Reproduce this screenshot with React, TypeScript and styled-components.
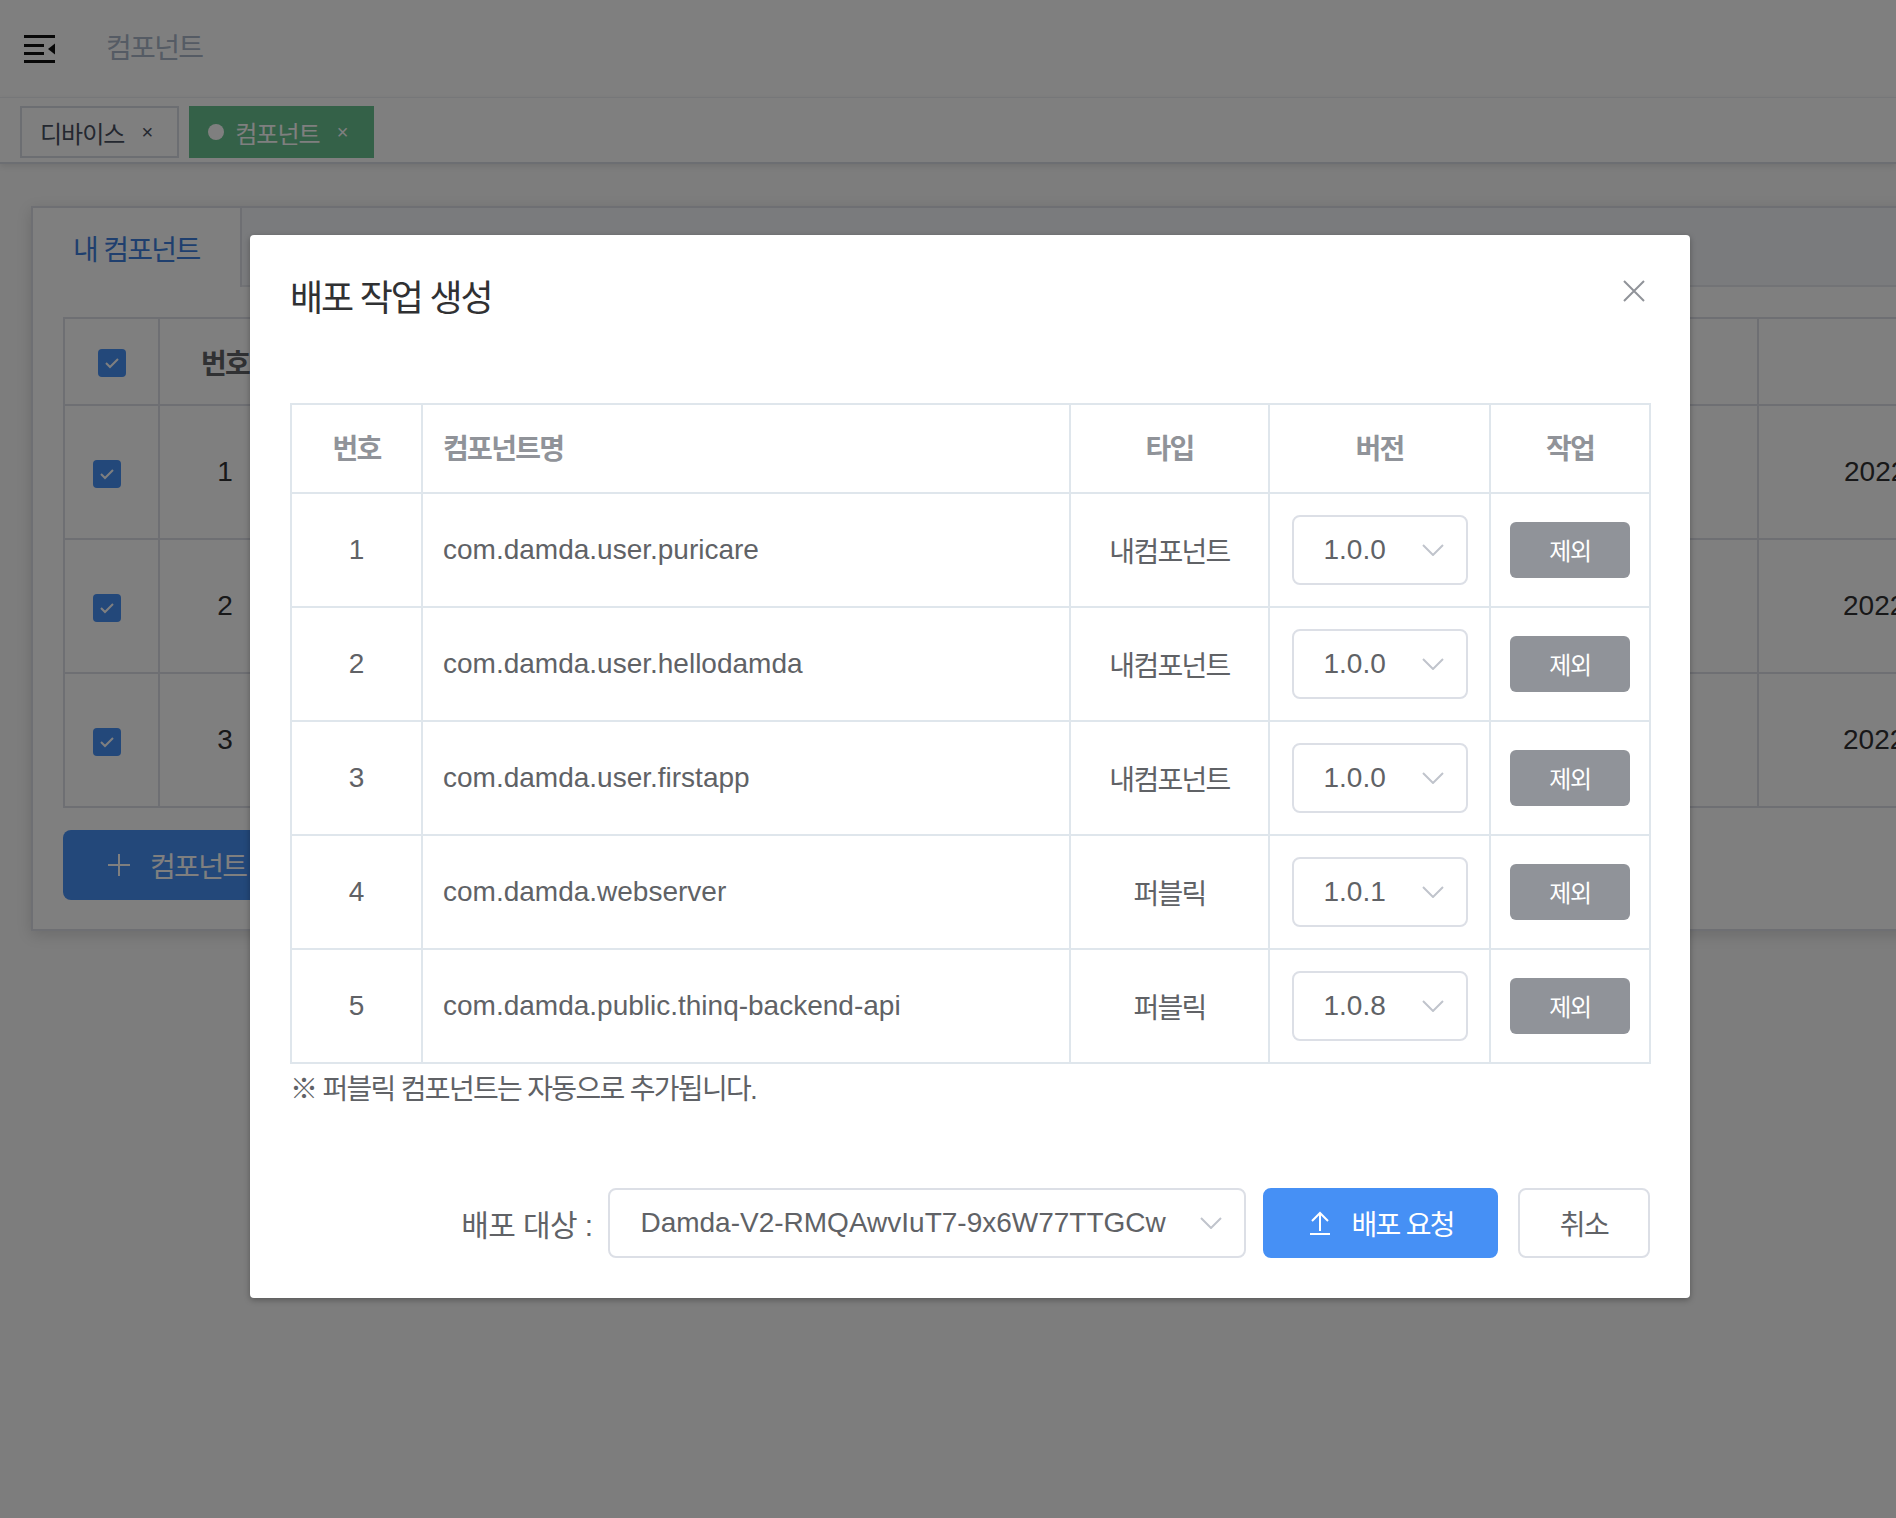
import React from "react";
import styled, { createGlobalStyle, css } from "styled-components";

const FONT = `"Liberation Sans", "Noto Sans CJK KR", sans-serif`;
const PRIMARY = "#4690F5";

/* Hangul in Noto Sans CJK is a little wider than in the reference font */
const tight = css`
  letter-spacing: -0.06em;
`;

const GlobalStyle = createGlobalStyle`
  html, body { margin: 0; padding: 0; }
  body {
    font-family: ${FONT};
    background: #fafafa;
    width: 1896px;
    height: 1518px;
    overflow: hidden;
  }
  * { box-sizing: border-box; }
`;

const Page = styled.div`
  position: relative;
  width: 1896px;
  height: 1518px;
  overflow: hidden;
  background: #fafafa;
  display: flex;
  flex-direction: column;
`;

const Navbar = styled.header`
  height: 97px;
  flex: none;
  background: #fff;
  display: flex;
  align-items: center;
  gap: 50px;
  padding-left: 24px;
`;

const Breadcrumb = styled.span`
  font-size: 28px;
  color: #aab6c8;
  line-height: 1;
  ${tight}
`;

const TagsBar = styled.nav`
  height: 67px;
  flex: none;
  background: #fff;
  border-top: 1px solid #eceef2;
  border-bottom: 2px solid #d8dce5;
  box-shadow: 0 2px 6px rgba(0, 0, 0, 0.1);
  display: flex;
  align-items: flex-start;
  gap: 10px;
  padding: 8px 0 0 20px;
`;

const Tag = styled.div<{ $active?: boolean }>`
  height: 52px;
  display: flex;
  align-items: center;
  padding: 0 24px 0 18px;
  font-size: 24px;
  letter-spacing: -0.04em;
  border: 2px solid #d8dce5;
  background: #fff;
  color: #495060;
  ${(p) =>
    p.$active &&
    css`
      background: #68c290;
      border-color: #68c290;
      color: #fff;
      padding-left: 17px;
    `}
`;

const TagDot = styled.span`
  width: 16px;
  height: 16px;
  border-radius: 50%;
  background: #fff;
  margin-right: 11px;
`;

const TagClose = styled.span`
  font-size: 20px;
  margin-left: 17px;
  line-height: 1;
  letter-spacing: 0;
`;

const Main = styled.main`
  flex: 1;
  padding: 42px 0 0 31px;
  overflow: hidden;
`;

const Card = styled.section`
  width: 2210px;
  height: 725px;
  background: #fff;
  border: 2px solid #dcdfe6;
  box-shadow: 0 4px 14px rgba(0, 0, 0, 0.14);
  display: flex;
  flex-direction: column;
`;

const TabHeader = styled.div`
  height: 79px;
  flex: none;
  background: #f5f7fa;
  border-bottom: 2px solid #e4e7ed;
  display: flex;
`;

const TabItem = styled.div<{ $active?: boolean }>`
  padding: 0 40px;
  display: flex;
  align-items: center;
  font-size: 28px;
  color: #909399;
  ${tight}
  ${(p) =>
    p.$active &&
    css`
      background: #fff;
      color: #3f7fdd;
      border-right: 2px solid #dcdfe6;
      margin-bottom: -2px;
    `}
`;

const CardBody = styled.div`
  padding: 30px 30px;
  display: flex;
  flex-direction: column;
  align-items: flex-start;
  gap: 22px;
`;

const BgTable = styled.table`
  border-collapse: collapse;
  table-layout: fixed;
  width: 2124px;
  font-size: 28px;
  color: #303133;
`;

const BgTh = styled.th`
  height: 87px;
  border: 2px solid #dcdfe6;
  font-weight: bold;
  color: #606266;
  text-align: center;
  padding: 0;
  ${tight}
`;

const BgTd = styled.td<{ $check?: boolean }>`
  height: 134px;
  border: 2px solid #dcdfe6;
  text-align: center;
  padding: 0 ${(p) => (p.$check ? "9px" : "0")} 0 0;
`;

const CheckBox = styled.span`
  display: inline-flex;
  align-items: center;
  justify-content: center;
  width: 28px;
  height: 28px;
  border-radius: 4px;
  background: #4690f5;
  vertical-align: middle;
`;

const AddButton = styled.button`
  height: 70px;
  padding: 0 40px 0 45px;
  border: none;
  border-radius: 8px;
  background: ${PRIMARY};
  color: #fff;
  font-family: ${FONT};
  font-size: 28px;
  display: flex;
  align-items: center;
  gap: 20px;
  ${tight}
`;

/* ---------- dialog ---------- */

const Overlay = styled.div`
  position: absolute;
  inset: 0;
  background: rgba(0, 0, 0, 0.5);
  padding: 235px 0 0 250px;
`;

const Dialog = styled.div`
  width: 1440px;
  background: #fff;
  border-radius: 4px;
  box-shadow: 0 2px 6px rgba(0, 0, 0, 0.3);
`;

const DialogHeader = styled.div`
  padding: 40px 40px 20px;
  display: flex;
  justify-content: space-between;
  align-items: flex-start;
`;

const DialogTitle = styled.h2`
  margin: 0;
  font-size: 36px;
  line-height: 48px;
  font-weight: normal;
  color: #303133;
  ${tight}
`;

const CloseButton = styled.button`
  width: 32px;
  height: 32px;
  padding: 0;
  border: none;
  background: none;
  display: flex;
  align-items: center;
  justify-content: center;
`;

const DialogBody = styled.div`
  padding: 60px 40px;
  color: #606266;
`;

const Table = styled.table`
  width: 100%;
  border-collapse: collapse;
  table-layout: fixed;
  font-size: 28px;
`;

const Th = styled.th<{ $align?: "left" | "center" }>`
  height: 89px;
  border: 2px solid #dfe6ec;
  font-weight: bold;
  color: #909399;
  text-align: ${(p) => p.$align ?? "center"};
  padding: 0 ${(p) => (p.$align === "left" ? "20px" : "0")} 3px;
  ${tight}
`;

const Td = styled.td<{ $align?: "left" | "center"; $hangul?: boolean }>`
  height: 114px;
  border: 2px solid #dfe6ec;
  color: #606266;
  text-align: ${(p) => p.$align ?? "center"};
  padding: 0 ${(p) => (p.$align === "left" ? "20px" : "0")};
  ${(p) => p.$hangul && tight}
`;

const Select = styled.div<{ $width: number }>`
  width: ${(p) => p.$width}px;
  height: 70px;
  border: 2px solid #dcdfe6;
  border-radius: 8px;
  background: #fff;
  display: inline-flex;
  align-items: center;
  justify-content: space-between;
  padding: 0 22px 0 30px;
  font-size: 28px;
  color: #606266;
  vertical-align: middle;
`;

const SmallButton = styled.button`
  height: 56px;
  padding: 0 39px 2px;
  border: none;
  border-radius: 6px;
  background: #909399;
  color: #fff;
  font-family: ${FONT};
  font-size: 24px;
  vertical-align: middle;
  ${tight}
`;

const Note = styled.p`
  margin: 8px 0 0;
  font-size: 28px;
  line-height: 36px;
  color: #606266;
  ${tight}
`;

const DialogFooter = styled.div`
  padding: 20px 40px 40px;
  display: flex;
  justify-content: flex-end;
  align-items: center;
`;

const FooterLabel = styled.label`
  font-size: 30px;
  color: #606266;
  margin-right: 16px;
  letter-spacing: -0.02em;
`;

const Button = styled.button<{ $primary?: boolean }>`
  height: 70px;
  padding: 0 40px;
  border-radius: 8px;
  font-family: ${FONT};
  font-size: 28px;
  display: flex;
  align-items: center;
  gap: 20px;
  border: 2px solid #dcdfe6;
  background: #fff;
  color: #606266;
  margin-left: 20px;
  ${tight}
  ${(p) =>
    p.$primary &&
    css`
      background: ${PRIMARY};
      border-color: ${PRIMARY};
      color: #fff;
      margin-left: 17px;
      padding: 0 42px 0 44px;
    `}
`;

/* ---------- icons ---------- */

const HamburgerIcon = () => (
  <svg width="32" height="28" viewBox="0 0 32 28">
    <rect x="0" y="0" width="31" height="3" fill="#111" />
    <rect x="0" y="9" width="20" height="3" fill="#111" />
    <rect x="0" y="17" width="20" height="3" fill="#111" />
    <rect x="0" y="25" width="31" height="3" fill="#111" />
    <polygon points="24,14 31,8.5 31,19.5" fill="#111" />
  </svg>
);

const Chevron = () => (
  <svg width="22" height="12" viewBox="0 0 22 12">
    <polyline points="1,1 11,11 21,1" fill="none" stroke="#c0c4cc" strokeWidth="2" />
  </svg>
);

const CloseIcon = () => (
  <svg width="22" height="22" viewBox="0 0 22 22">
    <path d="M1 1 L21 21 M21 1 L1 21" stroke="#909399" strokeWidth="2" />
  </svg>
);

const Check = () => (
  <svg width="16" height="12" viewBox="0 0 16 12">
    <polyline points="2,6 6,10 14,2" fill="none" stroke="#fff" strokeWidth="2" />
  </svg>
);

const UploadIcon = () => (
  <svg width="22" height="24" viewBox="0 0 22 24">
    <path d="M11 20 V3 M3 10 L11 2 L19 10" fill="none" stroke="#fff" strokeWidth="2" />
    <path d="M1 23 H21" stroke="#fff" strokeWidth="2" />
  </svg>
);

const PlusIcon = () => (
  <svg width="22" height="22" viewBox="0 0 22 22">
    <path d="M11 0 V22 M0 11 H22" stroke="#fff" strokeWidth="2" />
  </svg>
);

type Row = { name: string; type: string; version: string };

const rows: Row[] = [
  { name: "com.damda.user.puricare", type: "내컴포넌트", version: "1.0.0" },
  { name: "com.damda.user.hellodamda", type: "내컴포넌트", version: "1.0.0" },
  { name: "com.damda.user.firstapp", type: "내컴포넌트", version: "1.0.0" },
  { name: "com.damda.webserver", type: "퍼블릭", version: "1.0.1" },
  { name: "com.damda.public.thinq-backend-api", type: "퍼블릭", version: "1.0.8" },
];

const bgRows = [1, 2, 3];

export default function App() {
  return (
    <>
      <GlobalStyle />
      <Page>
        <Navbar>
          <HamburgerIcon />
          <Breadcrumb>컴포넌트</Breadcrumb>
        </Navbar>
        <TagsBar>
          <Tag>
            디바이스<TagClose>×</TagClose>
          </Tag>
          <Tag $active>
            <TagDot />
            컴포넌트<TagClose>×</TagClose>
          </Tag>
        </TagsBar>
        <Main>
          <Card>
            <TabHeader>
              <TabItem $active>내 컴포넌트</TabItem>
              <TabItem>퍼블릭 컴포넌트</TabItem>
            </TabHeader>
            <CardBody>
              <BgTable>
                <colgroup>
                  <col style={{ width: 95 }} />
                  <col style={{ width: 132 }} />
                  <col style={{ width: 700 }} />
                  <col style={{ width: 400 }} />
                  <col style={{ width: 367 }} />
                  <col style={{ width: 430 }} />
                </colgroup>
                <thead>
                  <tr>
                    <BgTh>
                      <CheckBox>
                        <Check />
                      </CheckBox>
                    </BgTh>
                    <BgTh>번호</BgTh>
                    <BgTh>컴포넌트명</BgTh>
                    <BgTh>타입</BgTh>
                    <BgTh>버전</BgTh>
                    <BgTh>등록일</BgTh>
                  </tr>
                </thead>
                <tbody>
                  {bgRows.map((n) => (
                    <tr key={n}>
                      <BgTd $check>
                        <CheckBox>
                          <Check />
                        </CheckBox>
                      </BgTd>
                      <BgTd>{n}</BgTd>
                      <BgTd>{rows[n - 1].name}</BgTd>
                      <BgTd>{rows[n - 1].type}</BgTd>
                      <BgTd>{rows[n - 1].version}</BgTd>
                      <BgTd>2022-05-1{n} 10:2{n}:31</BgTd>
                    </tr>
                  ))}
                </tbody>
              </BgTable>
              <AddButton>
                <PlusIcon />
                컴포넌트 추가
              </AddButton>
            </CardBody>
          </Card>
        </Main>

        <Overlay>
          <Dialog role="dialog" aria-label="배포 작업 생성">
            <DialogHeader>
              <DialogTitle>배포 작업 생성</DialogTitle>
              <CloseButton aria-label="닫기">
                <CloseIcon />
              </CloseButton>
            </DialogHeader>
            <DialogBody>
              <Table>
                <colgroup>
                  <col style={{ width: 131 }} />
                  <col style={{ width: 648 }} />
                  <col style={{ width: 199 }} />
                  <col style={{ width: 221 }} />
                  <col style={{ width: 160 }} />
                </colgroup>
                <thead>
                  <tr>
                    <Th>번호</Th>
                    <Th $align="left">컴포넌트명</Th>
                    <Th>타입</Th>
                    <Th>버전</Th>
                    <Th>작업</Th>
                  </tr>
                </thead>
                <tbody>
                  {rows.map((r, i) => (
                    <tr key={r.name}>
                      <Td>{i + 1}</Td>
                      <Td $align="left">{r.name}</Td>
                      <Td $hangul>{r.type}</Td>
                      <Td>
                        <Select $width={176}>
                          {r.version}
                          <Chevron />
                        </Select>
                      </Td>
                      <Td>
                        <SmallButton>제외</SmallButton>
                      </Td>
                    </tr>
                  ))}
                </tbody>
              </Table>
              <Note>※ 퍼블릭 컴포넌트는 자동으로 추가됩니다.</Note>
            </DialogBody>
            <DialogFooter>
              <FooterLabel>배포 대상 :</FooterLabel>
              <Select $width={638}>
                Damda-V2-RMQAwvIuT7-9x6W77TTGCw
                <Chevron />
              </Select>
              <Button $primary>
                <UploadIcon />
                배포 요청
              </Button>
              <Button>취소</Button>
            </DialogFooter>
          </Dialog>
        </Overlay>
      </Page>
    </>
  );
}
